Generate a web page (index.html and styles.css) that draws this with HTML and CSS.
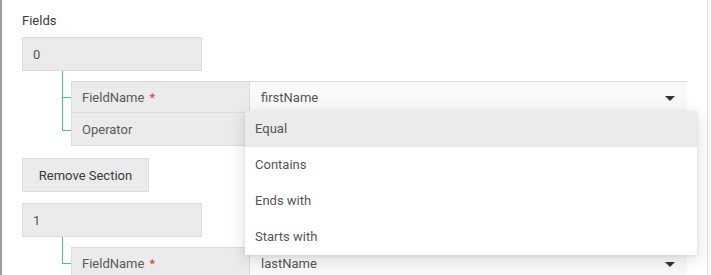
FILE: index.html
```html
<!DOCTYPE html>
<html>
<head>
<meta charset="utf-8">
<link rel="stylesheet" href="styles.css">
</head>
<body>
<div class="frame">
  <div class="edge"></div>
  <div class="content">
    <div class="title">Fields</div>

    <div class="section">
      <div class="index-box">0</div>
      <div class="children">
        <div class="row">
          <div class="label">FieldName <span class="req">*</span></div>
          <div class="select">
            <span class="value">firstName</span>
            <span class="arrow"></span>
            <ul class="menu">
              <li class="active">Equal</li>
              <li>Contains</li>
              <li>Ends with</li>
              <li>Starts with</li>
            </ul>
          </div>
        </div>
        <div class="row">
          <div class="label">Operator</div>
          <div class="select"><span class="value"></span></div>
        </div>
      </div>
    </div>

    <button class="btn">Remove Section</button>

    <div class="section">
      <div class="index-box">1</div>
      <div class="children">
        <div class="row">
          <div class="label">FieldName <span class="req">*</span></div>
          <div class="select">
            <span class="value">lastName</span>
            <span class="arrow"></span>
          </div>
        </div>
      </div>
    </div>
  </div>
</div>
</body>
</html>
```

FILE: styles.css
```css
* { box-sizing: border-box; }
html, body { margin: 0; padding: 0; background: #fbfbfb; }
body {
  font-family: Roboto, "Liberation Sans", Arial, sans-serif;
  font-size: 13px;
  color: #555;
  overflow: hidden;
  height: 275px;
}
.frame {
  display: flex;
  height: 275px;
}
.edge {
  width: 2px;
  flex: none;
  background: #9c9c9c;
}
.content {
  width: 706px;
  flex: none;
  background: #fff;
  border-right: 1px solid #e2e2e2;
  padding: 13px 0 0 20px;
}
.title {
  line-height: 16px;
  color: #3a3a3a;
  margin-bottom: 8px;
}
.index-box {
  width: 180px;
  height: 34px;
  background: #ebebeb;
  border: 1px solid #dcdcdc;
  padding-left: 10px;
  display: flex;
  align-items: center;
  color: #555;
}
.children {
  position: relative;
  margin-left: 40px;
  margin-top: 10px;
  padding-left: 9px;
}
.children::before {
  content: "";
  position: absolute;
  left: 0;
  top: -10px;
  bottom: 16px;
  width: 1px;
  background: #4fb7ae;
}
.row {
  position: relative;
  display: grid;
  grid-template-columns: 179px 437px;
  height: 32px;
}
.row + .row { height: 33px; }
.row::before {
  content: "";
  position: absolute;
  left: -9px;
  top: 50%;
  width: 9px;
  height: 1px;
  background: #4fb7ae;
}
.label {
  background: #ebebeb;
  border: 1px solid #dcdcdc;
  padding: 1px 0 0 10px;
  display: flex;
  align-items: center;
  gap: 5px;
  color: #5a5a5a;
}
.row + .row .label { border-top: none; }
.req { color: #e8323c; }
.select {
  position: relative;
  background: #f9f9f9;
  border-top: 1px solid #dcdcdc;
  padding-left: 11px;
  line-height: 31px;
  color: #555;
}
.arrow {
  position: absolute;
  right: 12px;
  top: 14px;
  width: 0;
  height: 0;
  border-left: 5px solid transparent;
  border-right: 5px solid transparent;
  border-top: 5px solid #333;
}
.menu {
  position: absolute;
  left: -5px;
  top: 29px;
  width: 452px;
  margin: 0;
  padding: 0;
  list-style: none;
  background: #fff;
  box-shadow: 0 4px 16px rgba(0, 0, 0, 0.14), 0 1px 3px rgba(0, 0, 0, 0.08);
  z-index: 10;
}
.menu li {
  height: 36px;
  line-height: 36px;
  padding-left: 10px;
  color: #555;
}
.menu li.active { background: #ebebeb; }
.btn {
  display: block;
  margin-top: 12px;
  margin-bottom: 11px;
  width: 127px;
  height: 34px;
  background: #ebebeb;
  border: 1px solid #dcdcdc;
  border-radius: 0;
  font-family: Roboto, "Liberation Sans", Arial, sans-serif;
  font-size: 13px;
  color: #3a3a3a;
  padding: 0;
}
```
